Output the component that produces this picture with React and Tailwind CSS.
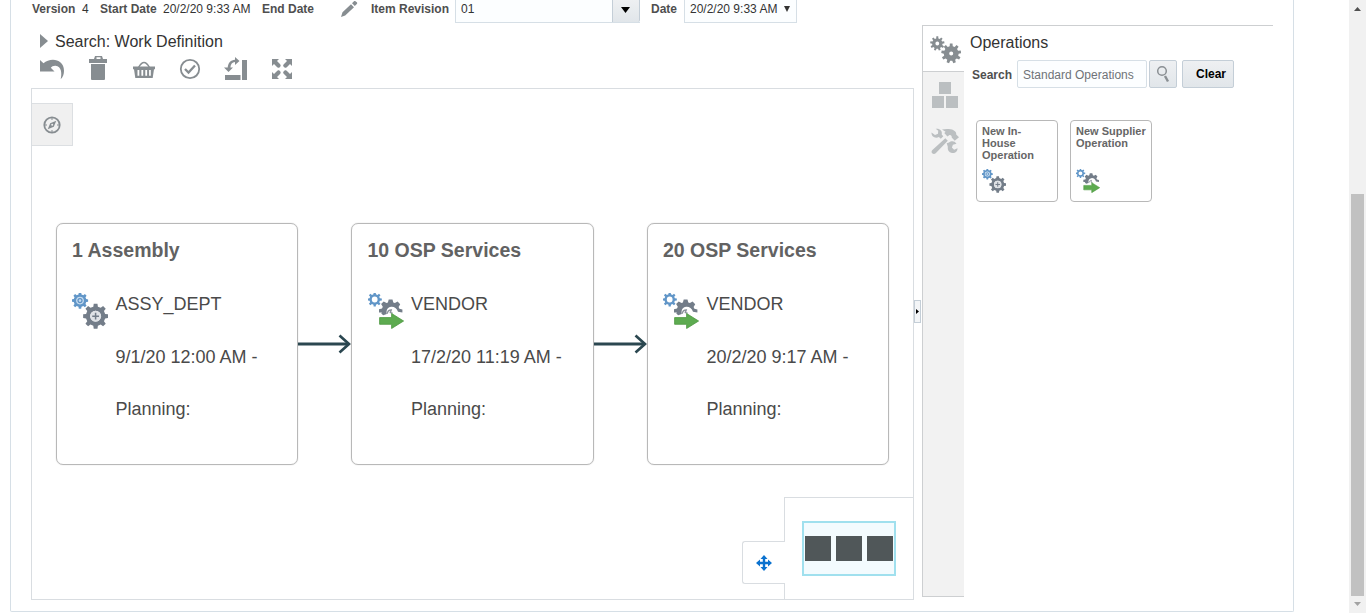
import React from "react";

function gearPath(cx, cy, outer, inner, teeth, hole) {
  const step = (Math.PI * 2) / teeth;
  const pts = [];
  const at = (r, a) => `${(cx + r * Math.cos(a)).toFixed(2)} ${(cy + r * Math.sin(a)).toFixed(2)}`;
  for (let i = 0; i < teeth; i++) {
    const a = i * step - Math.PI / 2;
    pts.push(at(inner, a - step * 0.3), at(outer, a - step * 0.19), at(outer, a + step * 0.19), at(inner, a + step * 0.3));
  }
  return `M${pts.join("L")}ZM${cx - hole} ${cy}a${hole} ${hole} 0 1 0 ${hole * 2} 0a${hole} ${hole} 0 1 0 ${-hole * 2} 0Z`;
}

function InHouseIcon({ className }) {
  return (
    <svg viewBox="0 0 36 36" className={className}>
      <path d={gearPath(8, 7.6, 8.2, 6.4, 8, 3.4)} fill="#6196c8" fillRule="evenodd" />
      <circle cx="8" cy="7.6" r="3.8" fill="#c5dbef" />
      <circle cx="8" cy="7.6" r="2" fill="none" stroke="#5b90c4" strokeWidth="1.2" />
      <path d={gearPath(23.6, 23.2, 12.6, 9.8, 8, 5.4)} fill="#737d89" fillRule="evenodd" />
      <circle cx="23.6" cy="23.2" r="5.5" fill="#dfe2e6" />
      <path d="M23.6 19.8v6.8M20.2 23.2h6.8" stroke="#737d89" strokeWidth="1.5" />
    </svg>
  );
}

function SupplierIcon({ className }) {
  return (
    <svg viewBox="0 0 36 36" className={className}>
      <path d={gearPath(6.7, 6.5, 7.2, 5.3, 8, 2.9)} fill="#6196c8" fillRule="evenodd" />
      <path
        d="M11 19.500v-3.200l3-.7.8-1.800-1.700-2.700 2.600-2.600 2.800 1.500 1.400-.6.8-3h3.800l.8 3 1.600.7 2.700-1.600 2.600 2.700-1.600 2.700.8 1.800 3 .7v3l-4.400-.6c-1.200-3.800-4-5.400-6.800-5.100-3.600.4-5.200 3.200-4.400 7.300l-3.600 1.300-1.900-1.900.6-.8Z"
        fill="#737d89"
      />
      <path d="M19.300 20.800c.2-2.200 1.700-3.800 4-3.800l-1 2.600 2.300.6" fill="none" stroke="#8b929b" strokeWidth="1.300" />
      <path d="M11.600 24.600h12v-4.100L35.600 28l-12 7.500v-4.200h-12Z" fill="#5dab50" stroke="#4b973f" strokeWidth=".8" />
    </svg>
  );
}

function OperationCard({ title, place, date, Icon }) {
  return (
    <div className="flex h-[242px] w-[242.5px] shrink-0 flex-col rounded-[7px] border border-[#b8b8b8] pl-[15.5px] shadow-[0_0_1px_#bbbbbb]">
      <h3 className="mt-[14px] h-6 text-[19.5px] leading-6 font-bold whitespace-nowrap text-[#626262]">{title}</h3>
      <div className="mt-[31px] flex">
        <Icon className="size-9 shrink-0" />
        <div className="ml-[7.5px] flex flex-col gap-[32.5px] pt-px text-[18px] leading-5 whitespace-nowrap text-[#4a4a4a]">
          <span>{place}</span>
          <span>{date}</span>
          <span>Planning:</span>
        </div>
      </div>
    </div>
  );
}

function Arrow() {
  return (
    <svg viewBox="0 0 53 22" className="h-[22px] w-[53px] shrink-0" fill="none" stroke="#2b4750">
      <path d="M0 11h50" strokeWidth="3" />
      <path d="M41.500 2.500 51 11l-9.500 8.500" strokeWidth="2.700" />
    </svg>
  );
}

function Toolbar() {
  return (
    <div className="flex h-[31px] items-start pl-[28px] text-[#878d91]">
      <svg viewBox="0 0 26 26" className="-mt-[2px] mr-5 size-[26px]" fill="currentColor">
        <path d="M1 5l3.500 3.300C11 2.300 25 3.500 25 15.800c0 3.400-1 6.200-3.300 8.400 1.300-5.200.9-13.200-5.200-13.400-2.300-.1-3.700.7-4.700 1.900L15.500 16.500H1Z" />
      </svg>
      <svg viewBox="0 0 26 26" className="-mt-[2px] mr-5 size-[26px]" fill="currentColor">
        <path d="M4 4h5l1-3h7l1 3h4v4H4ZM11.500 2.300v1.700h4V2.300ZM6 9h14V24a1 1 0 0 1-1 1H7a1 1 0 0 1-1-1Z" fillRule="evenodd" />
      </svg>
      <svg viewBox="0 0 26 26" className="-mt-px mr-5 size-[26px]">
        <path d="M7.500 11.500c2-3.500 3.500-5 5.500-5s3.500 1.500 5.500 5" fill="none" stroke="currentColor" strokeWidth="1.500" />
        <path d="M2 10.500h22v2.700h-1L21.700 22H4.300L3 13.200H2ZM6.500 14v5.800h1.800V14Zm3.900 0v5.800h1.800V14Zm3.900 0v5.800h1.800V14Zm3.800 0v5.800h1.700V14Z" fill="currentColor" fillRule="evenodd" />
      </svg>
      <svg viewBox="0 0 26 26" className="-mt-[2px] mr-5 size-[26px]" fill="none" stroke="currentColor">
        <circle cx="13" cy="14" r="9.200" strokeWidth="1.800" />
        <path d="m8 14 3.500 3.500 6.500-7" strokeWidth="2.300" />
      </svg>
      <svg viewBox="0 0 26 26" className="-mt-[2px] mr-5 size-[26px]" fill="currentColor">
        <path d="M2 20h15.500v5H2ZM19 5h5v20h-5Z" />
        <path d="M1 12.500h3.700c.4-4.700 3-7.500 7.300-7.800V2l4.500 4-4.500 4V7.100c-2.900.2-4.300 2.300-4.600 5.400H10L5.500 17Z" />
      </svg>
      <svg viewBox="0 0 26 26" className="-mt-[2px] size-[26px]" fill="currentColor">
        <path d="M3 4h7L8 6l4.500 4.500-3 3L5 9l-2 2ZM23 4h-7l2 2-4.500 4.500 3 3L21 9l2 2ZM3 24h7l-2-2 4.500-4.500-3-3L5 19l-2-2ZM23 24h-7l2-2-4.500-4.500 3-3L21 19l2-2Z" />
        <path d="M12.900 9v10M8 14h10" stroke="#fff" strokeWidth="2.600" />
      </svg>
    </div>
  );
}

function HeaderRow() {
  return (
    <div className="flex h-6 items-start text-[12px] leading-[18px] whitespace-nowrap text-[#333]">
      <b className="ml-[21px] w-[50px] text-[#4f4f4f]">Version</b>
      <span className="w-[18px]">4</span>
      <b className="w-[63px] text-[#4f4f4f]">Start Date</b>
      <span className="w-[99px]">20/2/20 9:33 AM</span>
      <b className="w-[78px] text-[#4f4f4f]">End Date</b>
      <svg viewBox="0 0 18 18" className="mr-[13px] size-[18px] fill-[#878d91]">
        <path d="M1 17l1.500-4.800L11 4.200l3 3-8.800 8.300ZM12 3.300l2-2c.7-.6 1.300-.5 1.900.1l.9.900c.6.600.6 1.100 0 1.700l-2 2Z" />
      </svg>
      <b className="w-[84px] text-[#4f4f4f]">Item Revision</b>
      <div className="flex h-[23px] w-[185px] border-b border-l border-[#d6dfe6] bg-[#fcfeff]">
        <span className="w-[156px] pl-[5px]">01</span>
        <div className="flex w-7 items-start justify-center rounded-br-[2px] border-x border-[#c4ced7] bg-linear-to-b from-[#eef0f2] to-[#e1e6ea] pt-[7px]">
          <svg viewBox="0 0 9 6" className="-ml-px h-[6px] w-[9px]"><path d="M0 0h9L4.500 6Z" /></svg>
        </div>
      </div>
      <b className="ml-[11px] w-[33px] text-[#4f4f4f]">Date</b>
      <div className="flex h-[23px] w-[113px] border-x border-b border-[#d6dfe6] bg-[#fcfeff] pl-[5px]">
        <span className="w-[94px]">20/2/20 9:33 AM</span>
        <svg viewBox="0 0 6 6" className="mt-[6px] h-[6px] w-[6px] fill-[#333]"><path d="M0 0h6L3 6Z" /></svg>
      </div>
    </div>
  );
}

function Canvas() {
  return (
    <div className="relative ml-5 flex h-[512px] w-[883px] flex-col border border-[#d9dde1]">
      <div className="mt-[14px] flex h-[43px] w-[41px] items-center justify-center border-y border-r border-[#dcdfe2] bg-[#f0f0f0]">
        <svg viewBox="0 0 18 18" className="size-[18px] text-[#878d91]">
          <circle cx="9" cy="9" r="7.700" fill="none" stroke="currentColor" strokeWidth="1.800" />
          <path d="M9 2v2M9 14v2M2 9h2M14 9h2" stroke="currentColor" strokeWidth="1" />
          <path d="m13.300 4.700-2.500 6-6.100 2.600 2.500-6.100Z" fill="currentColor" />
          <circle cx="9.200" cy="8.800" r="1" fill="#f0f0f0" />
        </svg>
      </div>
      <div className="mt-[77px] ml-[23.5px] flex items-center">
        <OperationCard title="1 Assembly" place="ASSY_DEPT" date="9/1/20 12:00 AM -" Icon={InHouseIcon} />
        <Arrow />
        <OperationCard title="10 OSP Services" place="VENDOR" date="17/2/20 11:19 AM -" Icon={SupplierIcon} />
        <Arrow />
        <OperationCard title="20 OSP Services" place="VENDOR" date="20/2/20 9:17 AM -" Icon={SupplierIcon} />
      </div>
      <div className="absolute right-0 bottom-0 flex items-start">
        <div className="relative z-10 mt-[44px] -mr-px flex h-[43px] w-[43px] items-center justify-center rounded-l-[3px] border-y border-l border-[#d9dde1] bg-white pr-px">
          <svg viewBox="0 0 18 18" className="size-[18px] fill-[#0b72cf]">
            <path d="m9 1 3.500 4H10.200v2.800H13V5.500L17 9l-4 3.500v-2.300h-2.800V13h2.300L9 17l-3.500-4h2.300v-2.800H5v2.300L1 9l4-3.500v2.300h2.800V5H5.500Z" />
          </svg>
        </div>
        <div className="flex h-[102px] w-[129px] items-start border-t border-l border-[#d9dde1] pt-[23px] pl-[17px]">
          <div className="flex h-[55px] w-[94px] items-center gap-[5px] border-2 border-[#a0e0ee] bg-[#f3fbfe] pl-px">
            <div className="h-[25px] w-[26px] bg-[#505759]" />
            <div className="h-[25px] w-[26px] bg-[#505759]" />
            <div className="h-[25px] w-[26px] bg-[#505759]" />
          </div>
        </div>
      </div>
    </div>
  );
}

function TabStrip() {
  return (
    <div className="flex w-[42px] shrink-0 flex-col border-b border-l border-[#cdcfd1] bg-[#f2f2f2]">
      <div className="flex h-[47px] items-start border-t border-b border-[#cdcfd1] bg-white pl-[7px] pt-[10px]">
        <svg viewBox="0 0 31 28" className="h-[28px] w-[31px] fill-[#878d91]">
          <path d={gearPath(7.3, 7.5, 7.2, 5.2, 9, 1.9)} fillRule="evenodd" />
          <path d={gearPath(21.2, 17.5, 10, 7.4, 9, 2)} fillRule="evenodd" />
        </svg>
      </div>
      <div className="mt-[10px] ml-[9px] flex w-[26px] flex-col items-center gap-[2px] self-start">
        <div className="size-3 bg-[#bbbfc1]" />
        <div className="flex gap-[2px]">
          <div className="size-3 bg-[#bbbfc1]" />
          <div className="size-3 bg-[#bbbfc1]" />
        </div>
      </div>
      <svg viewBox="0 0 28 27" className="mt-[20px] ml-2 h-[27px] w-7" fill="#bbbfc1">
        <path d="M11 1.500C14 .9 19.500.7 22.500 2.200c2.400 1.200 2.900 2.800 2.700 4.400l2.800 2.600-4.300 3.600-3-3.400c.2-1.700-.9-2.700-2.600-2.200l-1.700 1.300-3.100-3.400 1.300-1.400ZM14.300 10.300l2.500 2.500L4.700 25.200c-1 1-2.500 1.100-3.500.1-1-1.100-.8-2.400.2-3.400Z" />
        <path d="M.5 4.500 4 7l3-1.200.2-3L4.700.8C8.800.2 11.700 3.200 10.700 6.500l1.600 1.800-2.500 2.500-1.900-1.700C4 10.900.2 8.500.5 4.500Z" />
        <path d="m15.700 15.200 2.300-.6c2-2 5.800-1.900 7.500 1.200l-3.600 1-1 2.700 2.200 2.200 3.400-1.400c.1 3-2.400 5.300-5.600 4.700-3.200-.7-4.600-3.300-4.100-6.300Z" />
      </svg>
    </div>
  );
}

function OperationsPanel() {
  return (
    <section className="mt-px flex h-[572px] w-[351px]">
      <TabStrip />
      <div className="flex grow flex-col border-t border-[#cdcfd1]">
        <h2 className="mt-[7px] ml-[6px] h-5 text-[16px] leading-5 text-[#333]">Operations</h2>
        <div className="mt-[7px] ml-2 flex h-7 items-center text-[12px] text-[#333]">
          <b className="w-[45px] pt-px text-[#4f4f4f]">Search</b>
          <div className="flex h-7 w-[130px] items-center rounded-[2px] border border-[#d6dfe6] bg-[#fcfeff] pt-[2px] pl-[5px] whitespace-nowrap text-[#6f7377]">Standard Operations</div>
          <div className="ml-[2px] flex h-7 w-7 items-center justify-center rounded-[2px] border border-[#c4ced7] bg-linear-to-b from-[#eef0f2] to-[#e1e6ea]">
            <svg viewBox="0 0 14 18" className="h-[18px] w-[14px]" fill="none" stroke="#8a8f93">
              <circle cx="6" cy="6" r="4.300" strokeWidth="1.500" />
              <path d="m9 11 3 5.500" strokeWidth="2.400" />
            </svg>
          </div>
          <b className="ml-[5px] flex h-7 w-[52px] items-center justify-end rounded-[2px] border border-[#c4ced7] bg-linear-to-b from-[#eef0f2] to-[#e1e6ea] pr-[7px] text-black">Clear</b>
        </div>
        <div className="mt-8 ml-3 flex gap-3 text-[11px] leading-3 font-bold text-[#666]">
          <div className="flex h-[82px] w-[82px] flex-col justify-between rounded-[4px] border border-[#b8b8b8] pt-1 pb-2 pl-[5px]">
            <span>New In-<br />House<br />Operation</span>
            <InHouseIcon className="size-6" />
          </div>
          <div className="flex h-[82px] w-[82px] flex-col justify-between rounded-[4px] border border-[#b8b8b8] pt-1 pb-2 pl-[5px] whitespace-nowrap">
            <span>New Supplier<br />Operation</span>
            <SupplierIcon className="size-6" />
          </div>
        </div>
      </div>
    </section>
  );
}

export default function App() {
  return (
    <div className="flex h-[613px] w-[1366px] overflow-hidden bg-white font-['Liberation_Sans',Arial,sans-serif]">
      <main className="ml-[10px] h-[612px] w-[1284px] rounded-b-[2px] border-x border-b border-[#d6dfe6]">
        <HeaderRow />
        <div className="flex">
          <div className="w-[903px]">
            <div className="flex h-[33px] items-center pl-[29px] text-[16px] text-[#333]">
              <svg viewBox="0 0 8 14" className="mr-[7px] h-[14px] w-2 fill-[#878d91]"><path d="M0 0l8 7-8 7Z" /></svg>
              <span className="pt-[3px]">Search: Work Definition</span>
            </div>
            <Toolbar />
            <Canvas />
          </div>
          <div className="flex w-2 items-start pt-[276px]">
            <div className="flex h-[23px] w-[7px] items-center justify-center border border-[#c4ced7] bg-[#f3f5f7]">
              <svg viewBox="0 0 3 5" className="h-[5px] w-[3px]"><path d="M0 0l3 2.500L0 5Z" /></svg>
            </div>
          </div>
          <OperationsPanel />
        </div>
      </main>
      <div className="ml-auto flex w-[17px] flex-col items-center bg-[#f1f1f1]">
        <svg viewBox="0 0 7 4" className="mt-[7px] h-1 w-[7px] fill-[#505050]"><path d="M0 4h7L3.500 0Z" /></svg>
        <div className="mt-[183px] h-[402px] w-[13px] bg-[#c1c1c1]" />
        <svg viewBox="0 0 7 4" className="mt-[6px] h-1 w-[7px] fill-[#a3a3a3]"><path d="M0 0h7L3.500 4Z" /></svg>
      </div>
    </div>
  );
}
